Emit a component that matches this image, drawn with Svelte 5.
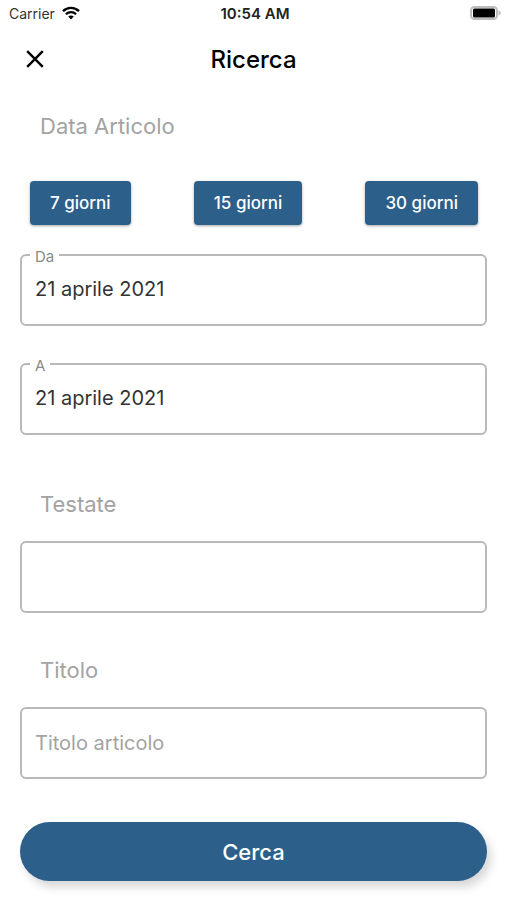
<script lang="ts">
  interface DateField {
    id: string;
    label: string;
    value: string;
  }

  const ranges = [7, 15, 30];

  let dates = $state<DateField[]>([
    { id: 'date-from', label: 'Da', value: '21 aprile 2021' },
    { id: 'date-to', label: 'A', value: '21 aprile 2021' },
  ]);
  let source = $state('');
  let title = $state('');

  function formatDate(date: Date): string {
    return date.toLocaleDateString('it-IT', { day: 'numeric', month: 'long', year: 'numeric' });
  }

  function selectRange(days: number) {
    const to = new Date();
    const from = new Date(to);
    from.setDate(to.getDate() - days);
    dates[0].value = formatDate(from);
    dates[1].value = formatDate(to);
  }
</script>

<div class="screen">
  <div class="status-bar">
    <div class="carrier">
      <span>Carrier</span>
      <svg width="18" height="14" viewBox="0 0 18 14" fill="none" stroke="#000" aria-hidden="true">
        <path d="M1 5.2C5.5 .7 12.5 .7 17 5.2" stroke-width="2.4" />
        <path d="M3.9 8.2C6.8 5.4 11.2 5.4 14.1 8.2" stroke-width="2.2" />
        <path d="M6.2 10.6C7.8 9.1 10.2 9.1 11.8 10.6L9 13.5Z" fill="#000" stroke="none" />
      </svg>
    </div>
    <span class="time">10:54 AM</span>
    <svg class="battery" width="31" height="14" viewBox="0 0 31 14" aria-hidden="true">
      <rect x="1" y="1" width="26" height="12" rx="3.5" fill="#fff" stroke="#bdbdbd" stroke-width="2" />
      <path d="M28.5 4.5C31.5 5.5 31.5 8.5 28.5 9.5Z" fill="#bdbdbd" />
      <rect x="3" y="2.5" width="22" height="9" rx="1.5" fill="#000" />
    </svg>
  </div>

  <header class="app-bar">
    <button class="close" type="button" aria-label="Chiudi">
      <svg width="18" height="18" viewBox="0 0 18 18" stroke="#000" stroke-width="2.4" aria-hidden="true">
        <path d="M1.2 1.2L16.8 16.8M16.8 1.2L1.2 16.8" />
      </svg>
    </button>
    <h1>Ricerca</h1>
  </header>

  <form onsubmit={(event) => event.preventDefault()}>
    <h2 class="section-label">Data Articolo</h2>
    <div class="ranges">
      {#each ranges as days}
        <button class="range" type="button" onclick={() => selectRange(days)}>{days} giorni</button>
      {/each}
    </div>

    <div class="dates">
      {#each dates as date (date.id)}
        <fieldset class="outlined">
          <legend><label for={date.id}>{date.label}</label></legend>
          <input id={date.id} type="text" bind:value={date.value} />
        </fieldset>
      {/each}
    </div>

    <label class="section-label" for="source">Testate</label>
    <input class="box" id="source" type="text" bind:value={source} />

    <label class="section-label" for="title">Titolo</label>
    <input class="box" id="title" type="text" placeholder="Titolo articolo" bind:value={title} />

    <button class="submit" type="submit">Cerca</button>
  </form>
</div>

<style>
  :global(body) {
    margin: 0;
    background: #fff;
  }

  .screen {
    font-family: Inter, 'Liberation Sans', sans-serif;
    color: #000;
  }

  .screen * {
    box-sizing: border-box;
  }

  .status-bar {
    display: grid;
    grid-template-columns: 1fr auto 1fr;
    align-items: center;
    height: 26px;
    padding: 0 6px 0 9px;
    font-size: 14px;
  }

  .carrier {
    display: flex;
    align-items: center;
    gap: 7px;
    color: #333;
  }

  .time {
    font-size: 15px;
    font-weight: 600;
    color: #222;
  }

  .battery {
    justify-self: end;
  }

  .app-bar {
    display: grid;
    grid-template-columns: 40px 1fr 40px;
    align-items: center;
    height: 66px;
    padding: 0 15px;
  }

  .close {
    display: grid;
    place-items: center;
    width: 40px;
    height: 40px;
    padding: 0;
    border: none;
    background: none;
    cursor: pointer;
  }

  h1 {
    margin: 0;
    font-size: 24px;
    font-weight: 500;
    text-align: center;
  }

  form {
    display: flex;
    flex-direction: column;
    padding: 20px 20px 19px;
  }

  .section-label {
    margin: 0;
    padding: 0 20px;
    font-size: 22px;
    font-weight: 400;
    line-height: 28px;
    color: #a3a3a3;
  }

  .ranges {
    display: flex;
    justify-content: space-between;
    padding: 41px 9px 21px 10px;
  }

  .range {
    height: 44px;
    padding: 0 20px;
    border: none;
    border-radius: 4px;
    background: #2c5f8a;
    box-shadow: 0 1px 3px rgba(0, 0, 0, 0.35);
    font: inherit;
    font-size: 17px;
    font-weight: 500;
    color: #fff;
    cursor: pointer;
  }

  .dates {
    display: flex;
    flex-direction: column;
    gap: 29px;
    padding-bottom: 55px;
  }

  .outlined {
    min-width: 0;
    margin: 0;
    padding: 0 13px;
    border: 2px solid #b9b9b9;
    border-radius: 6px;
  }

  legend {
    margin-left: -5px;
    padding: 4px 5px 0;
    font-size: 15px;
    line-height: 14px;
    color: #8a8a8a;
  }

  .outlined input {
    display: block;
    width: 100%;
    height: 60px;
    padding: 0 0 10px;
    border: none;
    outline: none;
    background: none;
    font: inherit;
    font-size: 20px;
    color: #333;
  }

  .box {
    width: 100%;
    height: 72px;
    margin: 23px 0 43px;
    padding: 0 13px;
    border: 2px solid #b9b9b9;
    border-radius: 6px;
    background: #fff;
    font: inherit;
    font-size: 20px;
    color: #333;
  }

  .box::placeholder {
    color: #a3a3a3;
    opacity: 1;
  }

  .submit {
    height: 59px;
    border: none;
    border-radius: 30px;
    background: #2c5f8a;
    box-shadow: 4px 6px 10px rgba(0, 0, 0, 0.16);
    font: inherit;
    font-size: 22px;
    font-weight: 500;
    color: #fff;
    cursor: pointer;
  }
</style>
